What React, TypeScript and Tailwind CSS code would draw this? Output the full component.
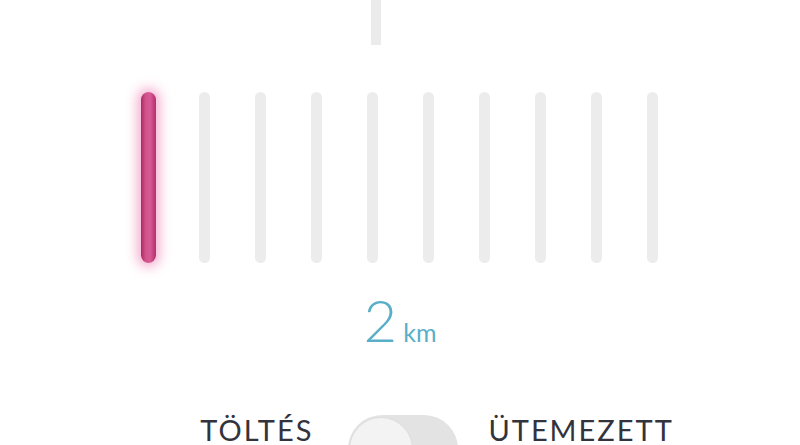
const bars = Array.from({ length: 10 }, (_, i) => i);

const Bar = ({ active }: { active: boolean }) =>
  active ? (
    <div className="h-[171px] w-[15px] rounded-full bg-[linear-gradient(90deg,#ab2a63_0%,#d0508a_30%,#d85a95_60%,#b3306d_100%)] shadow-[0_0_12px_4px_rgba(236,80,150,0.45)]" />
  ) : (
    <div className="h-[171px] w-[11px] rounded-full bg-[#ececec]" />
  );

const App = () => {
  return (
    <div className="flex h-[445px] w-[800px] flex-col items-center overflow-hidden bg-white font-['Lato',sans-serif] *:shrink-0">
      <div className="ml-[371px] h-[45px] w-[10px] self-start bg-[#ebebeb]" />

      <div className="mt-[47px] flex">
        {bars.map((i) => (
          <div key={i} className="flex w-[56px] justify-center">
            <Bar active={i === 0} />
          </div>
        ))}
      </div>

      <div className="mt-[22px] flex items-baseline text-[#5aafc8]">
        <span className="text-[58px] leading-[70px] font-light">2</span>
        <span className="ml-[6px] text-[25px] font-normal">km</span>
      </div>

      <div className="mt-[60px] ml-[74px] flex items-start">
        <span className="mt-[1px] text-[29px] leading-[28px] tracking-[2px] text-[#33333d]">TÖLTÉS</span>
        <div className="ml-[35px] h-[68px] w-[110px] rounded-full bg-[#e3e3e3] p-[3px] pl-[2px]">
          <div className="h-[62px] w-[62px] rounded-full bg-[#f3f3f3] shadow-[0_0_2px_rgba(0,0,0,0.08)]" />
        </div>
        <span className="ml-[30px] mt-[1px] text-[29px] leading-[28px] tracking-[2px] text-[#33333d]">ÜTEMEZETT</span>
      </div>
    </div>
  );
};

export default App;
